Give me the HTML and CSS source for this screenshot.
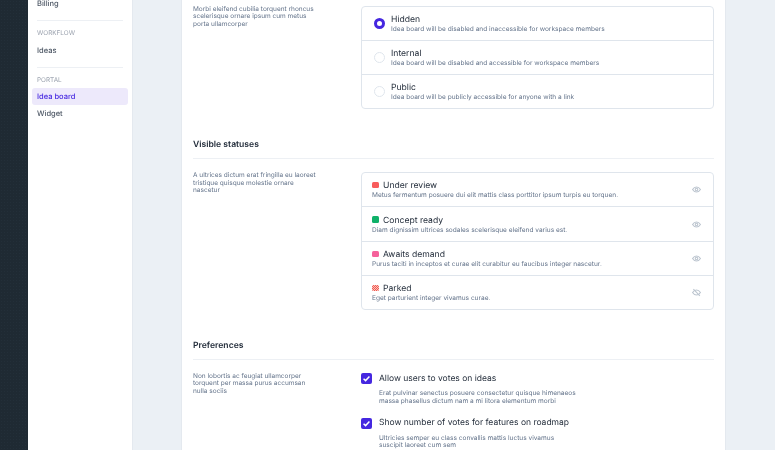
FILE: index.html
```html
<!DOCTYPE html>
<html>
<head>
    <meta charset="utf-8">
    <title>Idea board settings</title>
    <link rel="stylesheet" href="styles.css">
</head>
<body>
    <div class="rail"></div>

    <nav class="sidebar">
        <a class="nav-item billing">Billing</a>
        <hr class="nav-line">
        <div class="nav-group">Workflow</div>
        <a class="nav-item">Ideas</a>
        <hr class="nav-line">
        <div class="nav-group">Portal</div>
        <a class="nav-item active"><span class="soft">Idea board</span></a>
        <a class="nav-item">Widget</a>
    </nav>

    <main class="panel">
        <section class="row first-row">
            <p class="help">Morbi eleifend cubilia torquent rhoncus scelerisque ornare ipsum cum metus porta ullamcorper</p>
            <div class="card">
                <div class="option">
                    <span class="radio checked"></span>
                    <div>
                        <div class="option-title">Hidden</div>
                        <div class="option-desc">Idea board will be disabled and inaccessible for workspace members</div>
                    </div>
                </div>
                <div class="option">
                    <span class="radio"></span>
                    <div>
                        <div class="option-title">Internal</div>
                        <div class="option-desc">Idea board will be disabled and accessible for workspace members</div>
                    </div>
                </div>
                <div class="option">
                    <span class="radio"></span>
                    <div>
                        <div class="option-title">Public</div>
                        <div class="option-desc">Idea board will be publicly accessible for anyone with a link</div>
                    </div>
                </div>
            </div>
        </section>

        <h3 class="section-title">Visible statuses</h3>
        <section class="row status-row">
            <p class="help">A ultrices dictum erat fringilla eu laoreet tristique quisque molestie ornare nascetur</p>
            <div class="card">
                <div class="status">
                    <div class="status-text">
                        <div class="option-title"><span class="dot red"></span>Under review</div>
                        <div class="option-desc">Metus fermentum posuere dui elit mattis class porttitor ipsum turpis eu torquen.</div>
                    </div>
                    <svg class="eye" viewBox="0 0 16 16"><path d="M1 8C3 4.800 5.300 3.500 8 3.500S13 4.800 15 8C13 11.200 10.700 12.500 8 12.500S3 11.200 1 8Z"/><circle cx="8" cy="8" r="2.200"/></svg>
                </div>
                <div class="status">
                    <div class="status-text">
                        <div class="option-title"><span class="dot green"></span>Concept ready</div>
                        <div class="option-desc">Diam dignissim ultrices sodales scelerisque eleifend varius est.</div>
                    </div>
                    <svg class="eye" viewBox="0 0 16 16"><path d="M1 8C3 4.800 5.300 3.500 8 3.500S13 4.800 15 8C13 11.200 10.700 12.500 8 12.500S3 11.200 1 8Z"/><circle cx="8" cy="8" r="2.200"/></svg>
                </div>
                <div class="status">
                    <div class="status-text">
                        <div class="option-title"><span class="dot pink"></span>Awaits demand</div>
                        <div class="option-desc">Purus taciti in inceptos et curae elit curabitur eu faucibus integer nascetur.</div>
                    </div>
                    <svg class="eye" viewBox="0 0 16 16"><path d="M1 8C3 4.800 5.300 3.500 8 3.500S13 4.800 15 8C13 11.200 10.700 12.500 8 12.500S3 11.200 1 8Z"/><circle cx="8" cy="8" r="2.200"/></svg>
                </div>
                <div class="status">
                    <div class="status-text">
                        <div class="option-title"><span class="dot parked"></span>Parked</div>
                        <div class="option-desc">Eget parturient integer vivamus curae.</div>
                    </div>
                    <svg class="eye" viewBox="0 0 16 16"><path d="M1 8C3 4.800 5.300 3.500 8 3.500S13 4.800 15 8C13 11.200 10.700 12.500 8 12.500S3 11.200 1 8Z"/><path d="M2.500 2L14 14"/></svg>
                </div>
            </div>
        </section>

        <h3 class="section-title">Preferences</h3>
        <section class="row">
            <p class="help">Non lobortis ac feugiat ullamcorper torquent per massa purus accumsan nulla sociis</p>
            <div class="prefs">
                <div class="pref">
                    <div class="pref-head">
                        <span class="check"><svg viewBox="0 0 12 12"><path d="M2.800 6.200L5 8.300L9.200 3.900"/></svg></span>
                        <span class="pref-title">Allow users to votes on ideas</span>
                    </div>
                    <p class="pref-desc">Erat pulvinar senectus posuere consectetur quisque himenaeos massa phasellus dictum nam a mi litora elementum morbi</p>
                </div>
                <div class="pref">
                    <div class="pref-head">
                        <span class="check"><svg viewBox="0 0 12 12"><path d="M2.800 6.200L5 8.300L9.200 3.900"/></svg></span>
                        <span class="pref-title">Show number of votes for features on roadmap</span>
                    </div>
                    <p class="pref-desc">Ultricies semper eu class convallis mattis luctus vivamus suscipit laoreet cum sem</p>
                </div>
            </div>
        </section>
    </main>
</body>
</html>
```

FILE: styles.css
```css
body {
    margin: 0;
    height: 450px;
    overflow: hidden;
    display: flex;
    align-items: flex-start;
    background-color: #ebf0f5;
    color: #1f2937;
    font-family: 'Inter', sans-serif;
    text-rendering: geometricPrecision;
}
/* soft, grey text edges: these have no background of their own */
.row, .section-title, .nav-item:not(.active), .nav-group, .soft {
    filter: blur(0.3px);
}
.rail {
    flex: 0 0 28px;
    height: 450px;
    background: radial-gradient(#232f39 0.7px, #1f2a33 0.8px) 0 0 / 3px 3px;
}

/* Sidebar */
.sidebar {
    flex: 0 0 105px;
    height: 450px;
    box-sizing: border-box;
    padding: 0 4px;
    background-color: #fff;
    border-right: 1px solid #e4e9ef;
}
.nav-item {
    display: block;
    height: 17px;
    padding: 0 5px;
    font-size: 7.500px;
    font-weight: 500;
    line-height: 17px;
    color: #4b5563;
    border-radius: 3px;
}
.nav-item.billing {
    margin-top: -5px;
}
.nav-item.active {
    background-color: #ede9fb;
    color: #4527e0;
}
.soft {
    display: block;
}
.nav-line {
    height: 1px;
    margin: 8px 5px 6px;
    border: 0;
    background-color: #edf0f4;
}
.nav-group {
    padding: 0 5px;
    margin-bottom: 1.500px;
    font-size: 6.400px;
    line-height: 13px;
    text-transform: uppercase;
    color: #9ca3af;
}

/* Main panel */
.panel {
    flex: 0 0 545px;
    height: 450px;
    box-sizing: border-box;
    margin-left: 48px;
    padding: 0 11px;
    background-color: #fff;
    border-left: 1px solid #e4e9ef;
    border-right: 1px solid #e4e9ef;
}
.row {
    display: grid;
    grid-template-columns: 168px 353px;
}
.first-row {
    padding-top: 5.500px;
}
.help {
    margin: 0;
    width: 125px;
    font-size: 6.500px;
    line-height: 7.500px;
    color: #64748b;
}
.section-title {
    margin: 29.500px 0 13.200px;
    padding-bottom: 6px;
    border-bottom: 1px solid #edf0f4;
    font-size: 8.600px;
    font-weight: 600;
    line-height: 13px;
    color: #1f2937;
}

/* Bordered lists */
.card {
    border: 1px solid #dfe5ec;
    border-radius: 4px;
}
.option, .status {
    display: flex;
    align-items: center;
    height: 34.300px;
    box-sizing: border-box;
    border-bottom: 1px solid #dfe5ec;
}
.option:last-child, .status:last-child {
    height: 33.300px;
    border-bottom: 0;
}
.option {
    padding-left: 12px;
}
.status {
    padding: 0 12.500px 0 10px;
}
.status-text {
    flex: 1;
}
.option-title {
    padding-top: 1px;
    font-size: 8.600px;
    line-height: 12px;
    color: #1f2937;
}
.option-desc {
    font-size: 6.550px;
    line-height: 7.500px;
    color: #64748b;
}
.radio {
    flex: none;
    width: 11px;
    height: 11px;
    margin-right: 6px;
    box-sizing: border-box;
    border: 1px solid #dfe5ec;
    border-radius: 50%;
}
.radio.checked {
    border: 3.500px solid #4527e0;
}
.dot {
    display: inline-block;
    width: 6.500px;
    height: 6.500px;
    margin-right: 4.500px;
    border-radius: 1.500px;
}
.dot.red { background-color: #f85c5c; }
.dot.green { background-color: #10b169; }
.dot.pink { background-color: #f5629b; }
.dot.parked {
    background: repeating-conic-gradient(#f2574f 0 25%, #f9c4bd 0 50%) 0 0 / 2px 2px;
}
.eye {
    flex: none;
    width: 9px;
    height: 9px;
    fill: none;
    stroke: #bcc5cf;
    stroke-width: 2;
}

/* Preferences */
.prefs {
    display: flex;
    flex-direction: column;
    gap: 12px;
}
.pref-head {
    display: flex;
    align-items: center;
    gap: 7px;
}
.check {
    flex: none;
    display: flex;
    width: 11px;
    height: 11px;
    background-color: #4527e0;
    border-radius: 2px;
}
.check svg {
    fill: none;
    stroke: #fff;
    stroke-width: 1.600;
}
.pref-title {
    padding-top: 1px;
    font-size: 8.500px;
    line-height: 11px;
    color: #1f2937;
}
.pref-desc {
    width: 200px;
    margin: 5.500px 0 0 18px;
    font-size: 6.550px;
    line-height: 7.500px;
    color: #64748b;
}
```
